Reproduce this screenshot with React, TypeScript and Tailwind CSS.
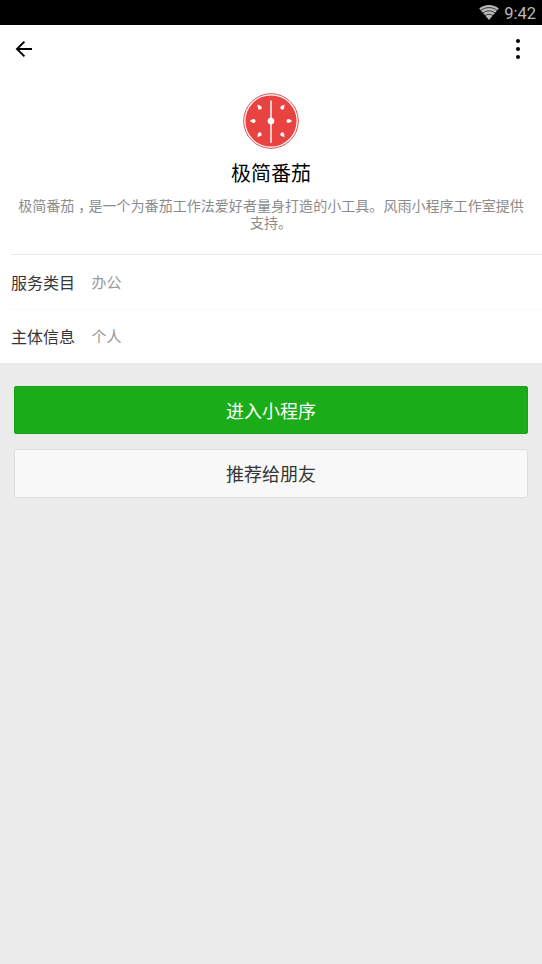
import React from "react";

const infos = [
  { label: "服务类目", value: "办公" },
  { label: "主体信息", value: "个人" },
];

const seeds = [0, 50, 130, 180, 230, 310];

const WifiIcon = () => (
  <svg width="20" height="15" viewBox="0 0 20 15">
    <path d="M10 15 0.2 3.6C3 1.3 6.3 0 10 0s7 1.3 9.8 3.6Z" fill="#b9b9b9" />
    <g fill="none" stroke="#000" strokeWidth="0.7">
      <path d="M1.6 5.6c5-4 11.800-4 16.800 0" />
      <path d="M3.600 8.200c3.900-3.100 8.900-3.100 12.800 0" />
      <path d="M5.800 10.800c2.600-2 5.800-2 8.400 0" />
    </g>
  </svg>
);

const BackIcon = () => (
  <svg width="18" height="18" viewBox="0 0 18 18" fill="none" stroke="#000" strokeWidth="2">
    <path d="M17 9H2.500M9.400 1.600 2 9l7.400 7.400" />
  </svg>
);

const TomatoLogo = () => (
  <svg width="56" height="56" viewBox="0 0 56 56">
    <circle cx="28" cy="28" r="27.300" fill="#fff" stroke="#e5484a" strokeWidth="1" />
    <circle cx="28" cy="28" r="25.600" fill="#e84340" />
    <path d="M28 7.500v42.500" stroke="#ffe3e0" strokeWidth="1.700" />
    <circle cx="28" cy="28" r="3.300" fill="#fff" />
    {seeds.map((deg) => (
      <path
        key={deg}
        d="M49.400 28c-1.700-.3-2.200-1.900-4-1.900a1.900 1.900 0 0 0 0 3.800c1.800 0 2.300-1.600 4-1.900Z"
        fill="#fff"
        transform={`rotate(${deg} 28 28)`}
      />
    ))}
  </svg>
);

const App = () => {
  return (
    <div className="w-full h-screen overflow-hidden flex flex-col bg-[#ebebeb] font-['Noto_Sans_CJK_SC',sans-serif]">
      <div className="h-[25px] shrink-0 bg-black flex items-center justify-end pr-[6px] gap-[5px]">
        <WifiIcon />
        <span className="font-[Roboto,sans-serif] text-[16.5px] leading-[25px] text-[#b9b9b9] pt-px">
          9:42
        </span>
      </div>

      <div className="bg-white shrink-0 h-[338px] flex flex-col">
        <header className="h-12 flex items-center justify-between pl-[15px] pr-[22px]">
          <button aria-label="返回">
            <BackIcon />
          </button>
          <button aria-label="更多" className="flex flex-col gap-1">
            <i className="size-[4px] rounded-full bg-black" />
            <i className="size-[4px] rounded-full bg-black" />
            <i className="size-[4px] rounded-full bg-black" />
          </button>
        </header>

        <section className="h-[181px] pt-5 flex flex-col items-center">
          <TomatoLogo />
          <h1 className="mt-[9px] text-[20px] leading-[30px] text-black">极简番茄</h1>
          <p className="mt-[9px] w-[508px] text-center text-[14.06px] leading-[17px] text-[#8c8c8c]">
            极简番茄<span className="relative left-[4px]">，</span>
            是一个为番茄工作法爱好者量身打造的小工具。风雨小程序工作室提供
            <br />
            支持。
          </p>
        </section>

        <ul className="ml-[11px]">
          {infos.map((info, idx) => (
            <li
              key={info.label}
              className={`flex items-center border-t leading-[22px] ${
                idx === 0 ? "h-[55px] border-[#e9e9e9]" : "h-[54px] pb-[2px] border-[#f9f9f9]"
              }`}
            >
              <span className="w-20 text-[16px] text-[#353535]">{info.label}</span>
              <span className="text-[15px] text-[#999] pl-[0.5px]">{info.value}</span>
            </li>
          ))}
        </ul>
      </div>

      <div className="flex flex-col gap-[15px] px-[14px] pt-[23px] text-[18px]">
        <button className="h-12 rounded-[2px] border border-[#1a9f1a] bg-[#1aad19] text-white">
          进入小程序
        </button>
        <button className="h-[49px] rounded-[2px] border border-[#dedede] bg-[#f8f8f8] text-[#353535]">
          推荐给朋友
        </button>
      </div>
    </div>
  );
};

export default App;
